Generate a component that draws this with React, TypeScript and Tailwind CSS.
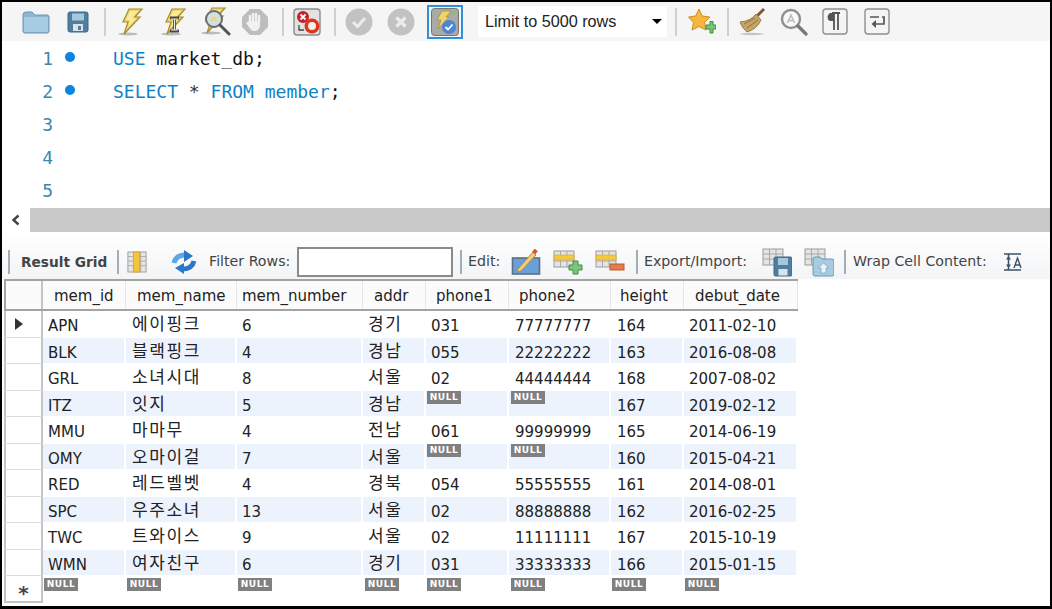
const rows = [
  ["APN", "에이핑크", "6", "경기", "031", "77777777", "164", "2011-02-10"],
  ["BLK", "블랙핑크", "4", "경남", "055", "22222222", "163", "2016-08-08"],
  ["GRL", "소녀시대", "8", "서울", "02", "44444444", "168", "2007-08-02"],
  ["ITZ", "잇지", "5", "경남", null, null, "167", "2019-02-12"],
  ["MMU", "마마무", "4", "전남", "061", "99999999", "165", "2014-06-19"],
  ["OMY", "오마이걸", "7", "서울", null, null, "160", "2015-04-21"],
  ["RED", "레드벨벳", "4", "경북", "054", "55555555", "161", "2014-08-01"],
  ["SPC", "우주소녀", "13", "서울", "02", "88888888", "162", "2016-02-25"],
  ["TWC", "트와이스", "9", "서울", "02", "11111111", "167", "2015-10-19"],
  ["WMN", "여자친구", "6", "경기", "031", "33333333", "166", "2015-01-15"],
];

const columns = [
  { name: "mem_id", width: "w-[83px]", head: "pl-[11px]", cell: "pl-[5px]", nul: "pl-[1px]" },
  { name: "mem_name", width: "w-[111px]", head: "pl-[11px]", cell: "pl-[6px]", nul: "pl-[1px]" },
  { name: "mem_number", width: "w-[126px]", head: "pl-[5px]", cell: "pl-[5px]", nul: "pl-[1px]" },
  { name: "addr", width: "w-[63px]", head: "pl-[11px]", cell: "pl-[5px]", nul: "pl-[2px]" },
  { name: "phone1", width: "w-[83px]", head: "pl-[10px]", cell: "pl-[5px]", nul: "pl-[1px]" },
  { name: "phone2", width: "w-[102px]", head: "pl-[10px]", cell: "pl-[6px]", nul: "pl-[2px]" },
  { name: "height", width: "w-[73px]", head: "pl-[9px]", cell: "pl-[6px]", nul: "pl-[1px]" },
  { name: "debut_date", width: "w-[114px]", head: "pl-[11px]", cell: "pl-[5px]", nul: "pl-[1px]" },
];

const Sep = ({ className = "" }: { className?: string }) => (
  <div className={`w-[2px] h-[28px] bg-[#cfcfcf] shrink-0 ${className}`} />
);

const ResultSep = ({ className = "" }: { className?: string }) => (
  <div className={`w-[2px] h-[24px] bg-[#a4adb6] shrink-0 ${className}`} />
);

const Bolt = () => (
  <>
    <ellipse cx="12" cy="27" rx="10" ry="1.5" fill="#bbb" />
    <path d="M13 2 L26 2 L19 10 L24 10 L8 27 L12 15 L7 15 Z" fill="#efd568" stroke="#a98a2c" strokeWidth="1.2" />
    <path d="M14 4 L22 4 L16 11 L20 11 L12 20 L14 13 L10 13 Z" fill="#f8eb9c" />
  </>
);

const Folder = () => (
  <svg viewBox="0 0 28 24" className="w-[28px] h-[24px] shrink-0">
    <path d="M1 5 Q1 2 4 2 L10 2 L13 5 L25 5 Q27 5 27 7 L27 21 Q27 23 25 23 L3 23 Q1 23 1 21 Z" fill="#8db6d0" stroke="#6b97b4" />
    <rect x="2" y="7" width="24" height="15" rx="1" fill="#a7cbe0" />
  </svg>
);

const Save = () => (
  <svg viewBox="0 0 22 22" className="w-[22px] h-[22px] shrink-0">
    <rect x="1" y="1" width="20" height="20" rx="2" fill="#4f7f9f" stroke="#3d6a87" />
    <rect x="5" y="2.5" width="12" height="7" fill="#a9c7da" />
    <rect x="6" y="13" width="10" height="7" fill="#d8e3ea" />
    <rect x="11" y="15" width="3" height="4" fill="#4f7f9f" />
  </svg>
);

const BoltIcon = () => (
  <svg viewBox="0 0 28 30" className="w-[28px] h-[30px] shrink-0">
    <Bolt />
  </svg>
);

const BoltCursor = () => (
  <svg viewBox="0 0 28 30" className="w-[28px] h-[30px] shrink-0">
    <Bolt />
    <path d="M11 11 L20 11 M15.5 11 L15.5 24 M11 24 L20 24" stroke="#444" strokeWidth="3" fill="none" />
    <path d="M12 12 L19 12 M15.5 12 L15.5 23 M12 23 L19 23" stroke="#eee" strokeWidth="1.2" fill="none" />
  </svg>
);

const BoltMagnifier = () => (
  <svg viewBox="0 0 32 32" className="w-[32px] h-[32px] shrink-0">
    <Bolt />
    <circle cx="15" cy="13" r="8" fill="#cfe0e6" stroke="#6b6b6b" strokeWidth="2" />
    <path d="M11 15 L15 9 L19 15 Z" fill="#e8d88a" />
    <path d="M21 19 L30 28" stroke="#555" strokeWidth="3" strokeLinecap="round" />
  </svg>
);

const Hand = () => (
  <svg viewBox="0 0 28 28" className="w-[28px] h-[28px] shrink-0">
    <path d="M9 1 L19 1 L27 9 L27 19 L19 27 L9 27 L1 19 L1 9 Z" fill="#bdbdbd" />
    <path d="M9 14 L9 8 M12 13 L12 6 M15 13 L15 6 M18 14 L18 8" stroke="#f1f1f1" strokeWidth="2.4" strokeLinecap="round" />
    <path d="M8 13 L19 13 L19 18 Q18 23 13 23 Q10 23 8 19 L5 15 Z" fill="#f1f1f1" />
  </svg>
);

const StopOnError = () => (
  <svg viewBox="0 0 28 28" className="w-[28px] h-[28px] shrink-0">
    <rect x="1" y="1" width="26" height="26" rx="3" fill="#e2e2e2" stroke="#8c8c8c" strokeWidth="1.4" />
    <circle cx="10" cy="9" r="6" fill="#c8202a" />
    <path d="M7.5 6.5 L12.5 11.5 M12.5 6.5 L7.5 11.5" stroke="#fff" strokeWidth="1.8" />
    <path d="M6 17 L6 22 L11 22 M14 18 L14 23" stroke="#444" strokeWidth="1.3" fill="none" />
    <circle cx="19" cy="18" r="7.5" fill="#d9371f" />
    <circle cx="19" cy="18" r="4" fill="#f6efe9" />
  </svg>
);

const Circle = ({ kind }: { kind: "check" | "cross" }) => (
  <svg viewBox="0 0 28 28" className="w-[28px] h-[28px] shrink-0">
    <circle cx="14" cy="14" r="13.5" fill="#c2c2c2" />
    {kind === "check" ? (
      <path d="M8 14 L12.5 18.5 L20 10" stroke="#ececec" strokeWidth="3" fill="none" />
    ) : (
      <path d="M9.5 9.5 L18.5 18.5 M18.5 9.5 L9.5 18.5" stroke="#ececec" strokeWidth="3.2" />
    )}
  </svg>
);

const Toggle = () => (
  <div className="w-[36px] h-[34px] border-2 border-[#2f8fd8] shrink-0 flex items-center justify-center">
    <svg viewBox="0 0 28 28" className="w-[28px] h-[28px]">
      <rect x="0.5" y="0.5" width="27" height="27" rx="3" fill="#a9a9a6" stroke="#77756f" />
      <path d="M11 3 L20 3 L15 9 L18 9 L7 21 L10 12 L6 12 Z" fill="#efd568" stroke="#a98a2c" strokeWidth="0.7" />
      <circle cx="23" cy="5" r="1.5" fill="#5fd35f" />
      <circle cx="18" cy="19" r="7" fill="#4a86d4" />
      <path d="M14.5 19 L17 21.5 L21.5 16.5" stroke="#fff" strokeWidth="1.8" fill="none" />
    </svg>
  </div>
);

const Star = () => (
  <svg viewBox="0 0 28 30" className="w-[28px] h-[30px] shrink-0">
    <path d="M11 2 L14.3 9 L22 10 L16.5 15.5 L18 23 L11 19.5 L4 23 L5.5 15.5 L0.5 10 L7.7 9 Z" fill="#f6b83a" stroke="#d08e22" />
    <path d="M18 18 L22 18 L22 14.5 L25 14.5 L25 18 L28 18 L28 22 L25 22 L25 26 L22 26 L22 22 L18 22 Z" fill="#7cc47a" stroke="#3f8f3e" />
  </svg>
);

const Broom = () => (
  <svg viewBox="0 0 28 30" className="w-[28px] h-[30px] shrink-0">
    <ellipse cx="13" cy="27" rx="12" ry="1.2" fill="#c4c4c4" />
    <path d="M18 9 L25 2" stroke="#7c5a2e" strokeWidth="3" />
    <path d="M1 15 Q12 14 17 7 L22 13 Q18 22 8 25 Q3 21 1 15 Z" fill="#c4a468" stroke="#9c7f48" />
    <path d="M5 17 L16 11 M8 21 L19 13" stroke="#8e7341" strokeWidth="1" />
  </svg>
);

const FindIcon = () => (
  <svg viewBox="0 0 28 28" className="w-[28px] h-[28px] shrink-0">
    <circle cx="11" cy="11" r="9" fill="#f8f8f8" stroke="#8f8f8f" strokeWidth="2.4" />
    <path d="M7.5 15 L11 7 L14.5 15 M9 12.5 L13 12.5" stroke="#b5bac0" strokeWidth="1.5" fill="none" />
    <path d="M18 18 L26 26" stroke="#777" strokeWidth="3.2" strokeLinecap="round" />
  </svg>
);

const Pilcrow = () => (
  <svg viewBox="0 0 26 27" className="w-[26px] h-[27px] shrink-0">
    <rect x="1" y="1" width="24" height="25" rx="3" fill="#f4f4f4" stroke="#8f8f8f" strokeWidth="1.4" />
    <path d="M12 5 L8 5 Q5.5 7 5.5 9 Q5.5 12 8 13 L12 13 Z" fill="#555" />
    <path d="M12 5 L12 22 M16 5 L16 22 M10 5 L18 5" stroke="#555" strokeWidth="1.8" />
  </svg>
);

const WrapIcon = () => (
  <svg viewBox="0 0 26 27" className="w-[26px] h-[27px] shrink-0">
    <rect x="1" y="1" width="24" height="25" rx="3" fill="#f4f4f4" stroke="#8f8f8f" strokeWidth="1.4" />
    <path d="M6 9 L15 9 M18 9 L20 9 L20 16 L9 16" stroke="#555" strokeWidth="1.7" fill="none" />
    <path d="M12 12 L7.5 16 L12 20 Z" fill="#555" />
  </svg>
);

const Grid = ({ highlight }: { highlight?: boolean }) => (
  <>
    <rect x="1" y="2" width="20" height="16" fill="#e4e4e4" stroke="#9b9b9b" />
    <path d="M1 7 L21 7 M1 12 L21 12 M7.5 2 L7.5 18 M14 2 L14 18" stroke="#a8a8a8" />
    {highlight && <rect x="1" y="6" width="20" height="5" fill="#f4c93c" stroke="#d9a520" strokeWidth="0.6" />}
  </>
);

const ColumnsIcon = () => (
  <svg viewBox="0 0 22 24" className="w-[20px] h-[22px] shrink-0">
    <rect x="1" y="1" width="20" height="22" fill="#e6e6e6" stroke="#9b9b9b" />
    <path d="M1 6 L21 6 M1 11 L21 11 M1 16 L21 16 M15 1 L15 23" stroke="#a8a8a8" />
    <rect x="7" y="1" width="7" height="22" fill="#f4c637" stroke="#d9a520" />
  </svg>
);

const Refresh = () => (
  <svg viewBox="0 0 26 24" className="w-[26px] h-[24px] shrink-0">
    <path d="M3 13 Q5 5 14 5" stroke="#5ea6e6" strokeWidth="5" fill="none" />
    <path d="M13 0 L22 6 L13 12 Z" fill="#2b77cc" />
    <path d="M23 11 Q21 19 12 19" stroke="#2b77cc" strokeWidth="5" fill="none" />
    <path d="M13 13 L4 18 L13 24 Z" fill="#2b77cc" />
  </svg>
);

const EditIcon = () => (
  <svg viewBox="0 0 30 28" className="w-[30px] h-[28px] shrink-0">
    <rect x="1.5" y="10" width="27" height="16" fill="#6b9fdc" stroke="#5f6f7d" strokeWidth="1.6" />
    <path d="M7 21 L22 4 L25 7 L10 23 L6 24 Z" fill="#f2cd74" stroke="#b08b3c" />
    <rect x="22" y="1.5" width="4" height="4" transform="rotate(42 24 3.5)" fill="#d84b4b" />
  </svg>
);

const AddRow = () => (
  <svg viewBox="0 0 30 26" className="w-[30px] h-[26px] shrink-0">
    <Grid highlight />
    <path d="M16 16 L20 16 L20 12 L25 12 L25 16 L29 16 L29 21 L25 21 L25 25 L20 25 L20 21 L16 21 Z" fill="#7cc47a" stroke="#3f8f3e" />
  </svg>
);

const DelRow = () => (
  <svg viewBox="0 0 30 26" className="w-[30px] h-[26px] shrink-0">
    <Grid highlight />
    <rect x="15" y="15" width="14" height="6" fill="#e47b50" stroke="#b85a32" />
  </svg>
);

const ExportIcon = () => (
  <svg viewBox="0 0 30 30" className="w-[30px] h-[30px] shrink-0">
    <Grid />
    <rect x="12" y="10" width="18" height="19" rx="1.5" fill="#4f7f9f" stroke="#3d6a87" />
    <rect x="16" y="11" width="10" height="7" fill="#a9c7da" />
    <rect x="16.5" y="22" width="9" height="6.5" fill="#d8e3ea" />
  </svg>
);

const ImportIcon = () => (
  <svg viewBox="0 0 30 30" className="w-[30px] h-[30px] shrink-0">
    <Grid />
    <path d="M9 12 Q9 10 11 10 L16 10 L18 12 L28 12 Q30 12 30 14 L30 27 Q30 29 28 29 L11 29 Q9 29 9 27 Z" fill="#a7cbe0" stroke="#6b97b4" />
    <path d="M19.5 16 L25 21 L22 21 L22 26 L17 26 L17 21 L14 21 Z" fill="#e9f2f7" stroke="#6b97b4" strokeWidth="0.6" />
  </svg>
);

const WrapCell = () => (
  <svg viewBox="0 0 18 18" className="w-[18px] h-[18px] shrink-0">
    <path d="M0 1 L17 1 M0 17 L17 17 M4.5 1 L4.5 17" stroke="#3d5166" strokeWidth="1.5" />
    <path d="M4.5 3 L7 6.5 L2 6.5 Z M4.5 15 L7 11.5 L2 11.5 Z" fill="#3d5166" />
    <path d="M10 15 L13.5 5 L17 15 M11 12 L16 12" stroke="#3d5166" strokeWidth="1.4" fill="none" />
  </svg>
);

const NullBadge = () => (
  <span className="block w-[34px] h-[13px] bg-[#808080] text-white text-[9px] font-bold leading-[12px] text-center tracking-[0.6px]">
    NULL
  </span>
);

export default function App() {
  return (
    <div className="w-[1052px] h-[609px] bg-white border-x-2 border-t-2 border-b-[3px] border-black flex flex-col overflow-hidden font-['DejaVu_Sans',sans-serif] text-[#333]">
      {/* query toolbar */}
      <div className="h-[39px] shrink-0 bg-[#f5f5f5] flex items-center pl-[20px]">
        <Folder />
        <div className="ml-[17px]"><Save /></div>
        <Sep className="ml-[15px]" />
        <div className="ml-[10px]"><BoltIcon /></div>
        <div className="ml-[15px]"><BoltCursor /></div>
        <div className="ml-[12px]"><BoltMagnifier /></div>
        <div className="ml-[10px]"><Hand /></div>
        <Sep className="ml-[13px]" />
        <div className="ml-[9px]"><StopOnError /></div>
        <Sep className="ml-[13px]" />
        <div className="ml-[9px]"><Circle kind="check" /></div>
        <div className="ml-[14px]"><Circle kind="cross" /></div>
        <div className="ml-[12px]"><Toggle /></div>
        <div className="ml-[15px] w-[189px] h-[31px] bg-white flex items-center justify-between pl-[7px] pr-[5px] shrink-0">
          <span className="text-[16.2px] text-[#222] font-['Liberation_Sans',sans-serif] whitespace-nowrap">Limit to 5000 rows</span>
          <span className="w-0 h-0 border-x-[5px] border-x-transparent border-t-[5px] border-t-black" />
        </div>
        <Sep className="ml-[8px]" />
        <div className="ml-[11px]"><Star /></div>
        <Sep className="ml-[11px]" />
        <div className="ml-[10px]"><Broom /></div>
        <div className="ml-[13px]"><FindIcon /></div>
        <div className="ml-[14px]"><Pilcrow /></div>
        <div className="ml-[16px]"><WrapIcon /></div>
      </div>

      {/* editor */}
      <div className="h-[167px] shrink-0 bg-white pt-[1px] font-['DejaVu_Sans_Mono',monospace] text-[18px]">
        {[1, 2, 3, 4, 5].map((n) => (
          <div key={n} className="h-[33px] flex items-center">
            <span className="w-[51px] text-right text-[#3a88ab]">{n}</span>
            {n <= 2 && <span className="ml-[12px] w-[10px] h-[10px] rounded-full bg-[#0a84e0] -mt-[3px]" />}
            {n === 1 && (
              <span className="ml-[38px] whitespace-pre text-[#111]">
                <span className="text-[#0c82c8]">USE</span> market_db;
              </span>
            )}
            {n === 2 && (
              <span className="ml-[38px] whitespace-pre text-[#0c82c8]">
                SELECT <span className="text-[#333]">*</span> FROM member<span className="text-[#111]">;</span>
              </span>
            )}
          </div>
        ))}
      </div>

      {/* horizontal scrollbar */}
      <div className="h-[24px] shrink-0 flex">
        <div className="w-[28px] bg-white flex items-center justify-center">
          <svg viewBox="0 0 10 12" className="w-[10px] h-[12px]">
            <path d="M7.5 1.5 L2.5 6 L7.5 10.5" stroke="#444" strokeWidth="2.4" fill="none" />
          </svg>
        </div>
        <div className="flex-1 bg-[#c9c9c9]" />
      </div>

      {/* result toolbar */}
      <div className="h-[47px] shrink-0 bg-gradient-to-b from-white to-[#f3f4f6] flex items-center pl-[6px] pt-[13px] text-[14.2px] text-[#444]">
        <ResultSep />
        <span className="ml-[11px] font-bold text-[13.7px] whitespace-nowrap w-[87px]">Result Grid</span>
        <ResultSep className="ml-[9px]" />
        <div className="ml-[8px]"><ColumnsIcon /></div>
        <div className="ml-[24px]"><Refresh /></div>
        <span className="ml-[12px] w-[84px] whitespace-nowrap">Filter Rows:</span>
        <div className="ml-[4px] w-[156px] h-[30px] bg-white border-2 border-[#8a8a8a] shrink-0" />
        <ResultSep className="ml-[7px]" />
        <span className="ml-[6px] w-[34px] whitespace-nowrap">Edit:</span>
        <div className="ml-[9px]"><EditIcon /></div>
        <div className="ml-[12px]"><AddRow /></div>
        <div className="ml-[12px]"><DelRow /></div>
        <ResultSep className="ml-[11px]" />
        <span className="ml-[6px] w-[109px] whitespace-nowrap">Export/Import:</span>
        <div className="ml-[9px]"><ExportIcon /></div>
        <div className="ml-[12px]"><ImportIcon /></div>
        <ResultSep className="ml-[10px]" />
        <span className="ml-[7px] w-[137px] whitespace-nowrap">Wrap Cell Content:</span>
        <div className="ml-[14px]"><WrapCell /></div>
      </div>

      {/* result grid */}
      <div className="flex-1 pl-[2px] text-[15px] text-[#222]">
        <div className="flex h-[32px] w-[794px] bg-[#fbfbfb] border-y-2 border-[#a3a3a3] border-l-2">
          <div className="w-[37px] border-r-2 border-[#c4c4c4] shrink-0" />
          {columns.map((col) => (
            <div key={col.name} className={`${col.width} ${col.head} shrink-0 flex items-center pt-[2px] border-r border-[#e6e6e6] whitespace-nowrap`}>
              {col.name}
            </div>
          ))}
        </div>
        {rows.map((row, i) => (
          <div key={row[0]} className="flex h-[26.5px]">
            <div className="w-[39px] shrink-0 border-l-2 border-r-2 border-[#c4c4c4] bg-white border-b border-b-[#dcdcdc] flex items-center pl-[9px]">
              {i === 0 && <span className="w-0 h-0 border-y-[6px] border-y-transparent border-l-[8px] border-l-[#333]" />}
            </div>
            <div className="flex pb-[1px]">
              {row.map((value, j) => (
                <div
                  key={j}
                  className={`${columns[j].width} ${value === null ? columns[j].nul : columns[j].cell} shrink-0 border-r-2 border-white whitespace-nowrap ${i % 2 === 1 ? "bg-[#edf3fd]" : ""}`}
                >
                  {value === null ? (
                    <NullBadge />
                  ) : j === 1 || j === 3 ? (
                    <span className="block text-[17px] leading-[24px] tracking-[1.6px] font-['Noto_Sans_CJK_KR',sans-serif]">
                      {value}
                    </span>
                  ) : (
                    <span className="block leading-[30px]">{value}</span>
                  )}
                </div>
              ))}
            </div>
          </div>
        ))}
        <div className="flex h-[27px]">
          <div className="w-[39px] shrink-0 border-l-2 border-r-2 border-b-2 border-[#c4c4c4] bg-white flex items-center justify-center text-[20px] font-bold text-[#444] pt-[9px]">
            *
          </div>
          <div className="flex pt-[2px]">
            {columns.map((col) => (
              <div key={col.name} className={`${col.width} ${col.nul} shrink-0`}>
                <NullBadge />
              </div>
            ))}
          </div>
        </div>
      </div>
    </div>
  );
}
